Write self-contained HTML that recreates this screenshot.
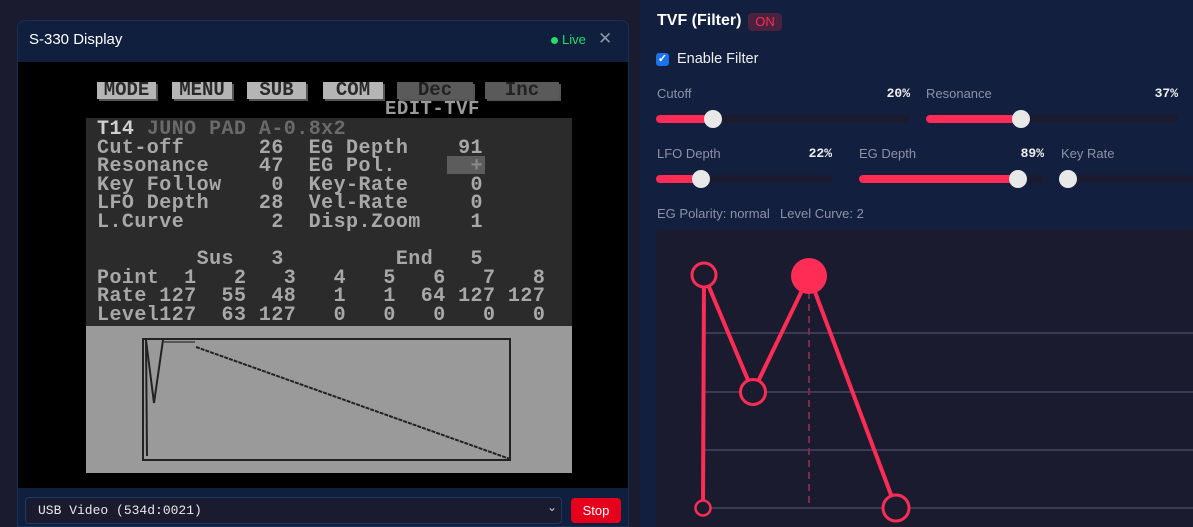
<!DOCTYPE html>
<html style="overflow:hidden;width:1193px;height:527px"><head><meta charset="utf-8"><style>
*{margin:0;padding:0;box-sizing:border-box}
body{width:1193px;height:527px;overflow:hidden;background:#1a1b2e;font-family:"Liberation Sans",sans-serif;position:relative}
.a{position:absolute}
.lcd{font-family:"Liberation Mono",monospace;font-size:20px;letter-spacing:0.45px;line-height:18.6px;white-space:pre;font-weight:bold;color:#a8a8a8}
.btn{position:absolute;top:82px;height:17px;background:#b5b5b5;color:#2a2a2a;font-family:"Liberation Mono",monospace;font-weight:bold;font-size:19px;line-height:17px;text-align:center;letter-spacing:0px;box-shadow:2px 2px 0 #555}
.lbl{position:absolute;font-size:13px;color:#8c93a6}
.pct{position:absolute;font-family:"Liberation Mono",monospace;font-size:13px;font-weight:bold;color:#f0f0f0;text-align:right}
.trk{position:absolute;height:8px;border-radius:4px;background:#1a1b2e}
.fill{position:absolute;left:0;top:0;height:8px;border-radius:4px;background:#ff2d55}
.th{position:absolute;top:-5px;width:18px;height:18px;border-radius:50%;background:#e8e8e8;margin-left:-9px}
</style></head><body>
<div class="a" style="left:17px;top:20px;width:612px;height:507px;background:#0f1f3d;border:1px solid #163056;border-radius:8px 8px 0 0"></div>
<div class="a" style="left:29px;top:31px;color:#fff;font-size:15px">S-330 Display</div>
<div class="a" style="left:551px;top:37px;width:7px;height:7px;border-radius:50%;background:#22dd66"></div>
<div class="a" style="left:562px;top:32px;color:#22dd66;font-size:13px">Live</div>
<div class="a" style="left:598px;top:29px;color:#8c93a6;font-size:17px">✕</div>
<div class="a" style="left:18px;top:62px;width:610px;height:426px;background:#000"></div>
<div class="btn" style="left:97px;width:59px">MODE</div>
<div class="btn" style="left:172px;width:60px">MENU</div>
<div class="btn" style="left:247px;width:59px">SUB</div>
<div class="btn" style="left:323px;width:60px">COM</div>
<div class="btn" style="left:397px;width:76px;background:#5a5a5a;color:#222">Dec</div>
<div class="btn" style="left:485px;width:74px;background:#5a5a5a;color:#222">Inc</div>
<div class="a lcd" style="left:385px;top:100px;color:#9a9a9a;font-size:19px">EDIT-TVF</div>
<div class="a" style="left:86px;top:118px;width:486px;height:208px;background:#2b2b2b"></div>
<div class="a" style="left:447px;top:156px;width:38px;height:18px;background:#5c5c5c"></div>
<div class="a lcd" style="left:97px;top:121px"><span style="color:#d0d0d0">T14</span> <span style="color:#6a6a6a">JUNO PAD A-0.8x2</span>
Cut-off      26  EG Depth    91
Resonance    47  EG Pol.      <span style="color:#888">+</span>
Key Follow    0  Key-Rate     0
LFO Depth    28  Vel-Rate     0
L.Curve       2  Disp.Zoom    1

        Sus   3         End   5
Point  1   2   3   4   5   6   7   8
Rate 127  55  48   1   1  64 127 127
Level127  63 127   0   0   0   0   0</div>
<div class="a" style="left:86px;top:326px;width:486px;height:147px;background:#9a9a9a"></div>
<div class="a" style="left:142px;top:338px;width:369px;height:123px;border:2px solid #222"></div>
<svg class="a" style="left:0;top:0" width="640" height="527"><polyline points="146,340 147,456" stroke="#222" stroke-width="2" fill="none"/><polyline points="146,340 154,403 163,340" stroke="#222" stroke-width="2" fill="none"/><line x1="164" y1="342" x2="195" y2="342" stroke="#555" stroke-width="2"/><line x1="196" y1="347" x2="510" y2="459" stroke="#222" stroke-width="2" stroke-dasharray="4,1"/></svg>
<div class="a" style="left:25px;top:497px;width:537px;height:27px;background:#1a1b2e;border:1px solid #1e3a5f;border-radius:4px"></div>
<div class="a" style="left:38px;top:503px;color:#e8e8e8;font-family:'Liberation Mono',monospace;font-size:13px">USB Video (534d:0021)</div>
<div class="a" style="left:547px;top:500px;color:#ccc;font-size:12px">⌄</div>
<div class="a" style="left:571px;top:498px;width:50px;height:25px;background:#e5001c;border-radius:4px;color:#fff;font-size:13px;text-align:center;line-height:25px">Stop</div>
<div class="a" style="left:640px;top:0;width:553px;height:527px;background:#121f3f"></div>
<div class="a" style="left:657px;top:12px;color:#fff;font-size:16px;font-weight:bold">TVF (Filter)</div>
<div class="a" style="left:748px;top:13px;width:34px;height:18px;background:#4a2240;border-radius:4px;color:#ff2d55;font-size:13px;text-align:center;line-height:18px">ON</div>
<div class="a" style="left:656px;top:53px;width:13px;height:13px;background:#1a73e8;border-radius:3px;color:#fff;font-size:11px;line-height:13px;text-align:center;font-weight:bold">✓</div>
<div class="a" style="left:677px;top:51px;color:#eee;font-size:14.5px">Enable Filter</div>
<div class="lbl" style="left:657px;top:86px">Cutoff</div><div class="pct" style="left:860px;width:50px;top:86px">20%</div>
<div class="lbl" style="left:926px;top:86px">Resonance</div><div class="pct" style="left:1128px;width:50px;top:86px">37%</div>
<div class="trk" style="left:656px;top:115px;width:254px"><div class="fill" style="width:57px"></div><div class="th" style="left:57px"></div></div>
<div class="trk" style="left:926px;top:115px;width:252px"><div class="fill" style="width:95px"></div><div class="th" style="left:95px"></div></div>
<div class="lbl" style="left:657px;top:146px">LFO Depth</div><div class="pct" style="left:782px;width:50px;top:146px">22%</div>
<div class="lbl" style="left:859px;top:146px">EG Depth</div><div class="pct" style="left:994px;width:50px;top:146px">89%</div>
<div class="lbl" style="left:1061px;top:146px">Key Rate</div>
<div class="trk" style="left:656px;top:175px;width:176px"><div class="fill" style="width:45px"></div><div class="th" style="left:45px"></div></div>
<div class="trk" style="left:859px;top:175px;width:184px"><div class="fill" style="width:159px"></div><div class="th" style="left:159px"></div></div>
<div class="trk" style="left:1061px;top:175px;width:132px"><div class="th" style="left:7px"></div></div>
<div class="lbl" style="left:657px;top:206px">EG Polarity: normal</div>
<div class="lbl" style="left:780px;top:206px">Level Curve: 2</div>
<div class="a" style="left:656px;top:229px;width:537px;height:298px;background:#1a1b2e;border-radius:6px 0 0 0"></div>
<svg class="a" style="left:640px;top:0" width="553" height="527">
<g stroke="#3a3b52" stroke-width="2"><line x1="65" y1="333" x2="553" y2="333"/><line x1="65" y1="392" x2="553" y2="392"/><line x1="65" y1="450" x2="553" y2="450"/><line x1="65" y1="508" x2="553" y2="508"/></g>
<line x1="169" y1="292" x2="169" y2="503" stroke="#7a2a4a" stroke-width="2" stroke-dasharray="7,5"/>
<polyline points="63,508 64,275 113,392 169,276 256,508" stroke="#ff2d55" stroke-width="4" fill="none" stroke-linejoin="round"/>
<circle cx="64" cy="275" r="12" fill="#1a1b2e" stroke="#ff2d55" stroke-width="3"/>
<circle cx="113" cy="392" r="12.5" fill="#1a1b2e" stroke="#ff2d55" stroke-width="3"/>
<circle cx="169" cy="276" r="18" fill="#ff2d55"/>
<circle cx="256" cy="508" r="13" fill="#1a1b2e" stroke="#ff2d55" stroke-width="3"/>
<circle cx="63" cy="508" r="7.5" fill="#1a1b2e" stroke="#ff2d55" stroke-width="2.5"/>
</svg>
</body></html>
